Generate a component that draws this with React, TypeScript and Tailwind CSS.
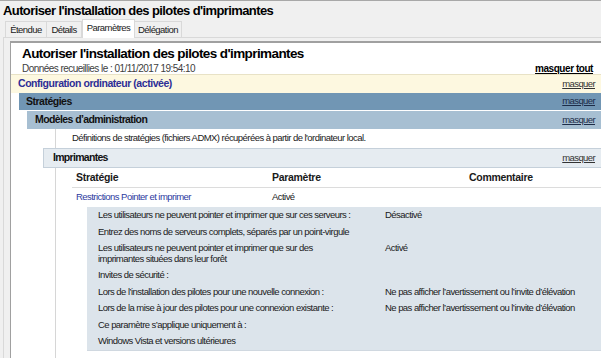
const tabs = [
  { label: 'Étendue', w: 'w-[42px]' },
  { label: 'Détails', w: 'w-[35px]' },
  { label: 'Paramètres', w: 'w-[53px]', active: true },
  { label: 'Délégation', w: 'w-[47px]' },
];

const details = [
  { label: 'Les utilisateurs ne peuvent pointer et imprimer que sur ces serveurs :', value: 'Désactivé' },
  { label: 'Entrez des noms de serveurs complets, séparés par un point-virgule', value: '' },
  { label: 'Les utilisateurs ne peuvent pointer et imprimer que sur des imprimantes situées dans leur forêt', value: 'Activé' },
  { label: 'Invites de sécurité :', value: '' },
  { label: 'Lors de l’installation des pilotes pour une nouvelle connexion :', value: 'Ne pas afficher l’avertissement ou l’invite d’élévation' },
  { label: 'Lors de la mise à jour des pilotes pour une connexion existante :', value: 'Ne pas afficher l’avertissement ou l’invite d’élévation' },
  { label: 'Ce paramètre s’applique uniquement à :', value: '' },
  { label: 'Windows Vista et versions ultérieures', value: '' },
];

function Hide({ className = '' }: { className?: string }) {
  return <span className={`text-[9.5px] tracking-[-0.6px] underline ${className}`}>masquer</span>;
}

export default function App() {
  return (
    <div className="w-[601px] h-[358px] overflow-hidden bg-[#f0f0f0] border-t border-[#a8a8a8] font-['Liberation_Sans',Arial,sans-serif] text-[9.5px] tracking-[-0.55px] text-[#1a1a1a] flex flex-col">
      <div className="h-[18px] pl-[3px] text-[13px] tracking-[-0.6px] font-bold leading-[19px] text-black">
        Autoriser l'installation des pilotes d'imprimantes
      </div>

      <div className="flex items-end h-[18px] pl-[5px]">
        {tabs.map((t) => (
          <div
            key={t.label}
            className={
              t.active
                ? `${t.w} h-[19px] -mb-px relative z-10 bg-white border border-b-0 border-[#d9d9d9] text-center leading-[15px]`
                : `${t.w} h-[16px] border border-b-0 border-l-0 first:border-l border-[#d9d9d9] text-center leading-[15px]`
            }
          >
            {t.label}
          </div>
        ))}
      </div>

      <div className="flex-1 ml-[3px] border-l border-t border-[#d9d9d9] pt-[3px] pl-[6px] flex flex-col">
        <div className="flex-1 bg-white border-l border-t-2 border-[#a0a0a0] flex flex-col">
          <div className="pl-[11px] pt-[3px] pr-[8px]">
            <div className="text-[13.5px] tracking-[-0.6px] font-bold leading-[16px] text-black">
              Autoriser l'installation des pilotes d'imprimantes
            </div>
            <div className="flex justify-between items-center h-[12px]">
              <span className="text-[10px] tracking-[-0.55px] text-[#404040]">Données recueillies le : 01/11/2017 19:54:10</span>
              <span className="text-[10px] tracking-[-0.45px] font-bold underline text-black">masquer tout</span>
            </div>
          </div>

          <div className="h-[19px] bg-[#fdf8e0] border-t border-[#e8e2c6] flex items-center justify-between pl-[7px] pr-[6px]">
            <span className="text-[10.5px] tracking-[-0.45px] font-bold text-[#2e2e96]">Configuration ordinateur (activée)</span>
            <Hide className="text-[#333]" />
          </div>

          <div className="ml-[8px] h-[17px] bg-[#7196b4] flex items-center justify-between pl-[7px] pr-[6px]">
            <span className="text-[10.5px] tracking-[-0.5px] font-bold text-[#111]">Stratégies</span>
            <Hide className="text-[#1c2c48]" />
          </div>

          <div className="ml-[16px] mt-px h-[18px] bg-[#a7bfd2] flex items-center justify-between pl-[8px] pr-[6px]">
            <span className="text-[10.5px] tracking-[-0.6px] font-bold text-[#111]">Modèles d’administration</span>
            <Hide className="text-[#1c2c48]" />
          </div>

          <div className="flex-1 ml-[44px] border-l border-[#d6d6d6] flex flex-col">
            <div className="h-[19px] pl-[16px] flex items-center">
              Définitions de stratégies (fichiers ADMX) récupérées à partir de l'ordinateur local.
            </div>

            <div className="-ml-[13px] h-[20px] bg-[#e6ecf1] border border-r-0 border-[#c5d0da] flex items-center justify-between pl-[9px] pr-[6px]">
              <span className="text-[10.5px] tracking-[-0.7px] font-bold text-[#111]">Imprimantes</span>
              <Hide className="text-[#333]" />
            </div>

            <div className="ml-[16px]">
              <div className="grid grid-cols-[196px_197px_1fr] h-[20px] items-center pl-[4px] border-b border-[#dcdcdc] text-[10.5px] tracking-[-0.3px] font-bold">
                <span>Stratégie</span>
                <span>Paramètre</span>
                <span>Commentaire</span>
              </div>
              <div className="grid grid-cols-[196px_197px_1fr] h-[19px] items-center pl-[4px]">
                <span className="text-[#2d3aa0]">Restrictions Pointer et imprimer</span>
                <span>Activé</span>
                <span></span>
              </div>
            </div>

            <div className="ml-[31px] bg-[#dce4eb] pl-[11px] border-b border-[#d0d8e0]">
              {details.map((d, i) => (
                <div key={i} className="grid grid-cols-[287px_1fr] py-[3px] leading-[10.5px]">
                  <span className="pr-[32px]">{d.label}</span>
                  <span>{d.value}</span>
                </div>
              ))}
            </div>
          </div>
        </div>
      </div>
    </div>
  );
}
